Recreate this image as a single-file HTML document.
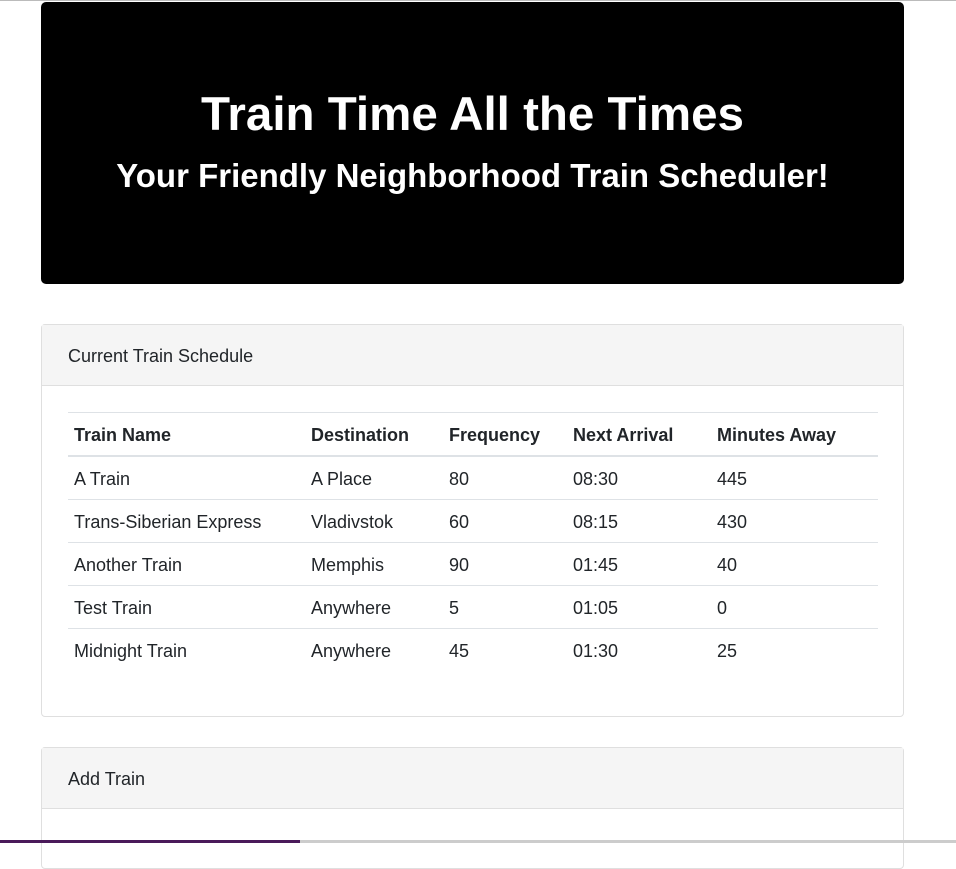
<!DOCTYPE html>
<html><head><style>
body{margin:0;width:956px;height:843px;overflow:hidden;background:#fff;font-family:"Liberation Sans",sans-serif;color:#212529;position:relative}
.top{position:absolute;left:0;top:0;width:956px;height:1px;background:#bbb}
.jumbo{position:absolute;left:41px;top:2px;width:863px;height:282px;background:#000;border-radius:5px;color:#fff;text-align:center}
.jumbo h1{position:absolute;top:85px;left:0;right:0;margin:0;font-size:47.5px;font-weight:bold;line-height:56px}
.jumbo h2{position:absolute;top:154px;left:0;right:0;margin:0;font-size:33px;font-weight:bold;line-height:40px}
.card{position:absolute;left:41px;width:861px;border:1px solid #dfdfdf;border-radius:4px;background:#fff}
.ch{height:61px;background:#f5f5f5;border-bottom:1px solid #dfdfdf;font-size:18px;line-height:63px;padding-left:26px;box-sizing:border-box}
table{position:absolute;left:26px;top:87px;width:810px;border-collapse:collapse;font-size:18px}
td,th{text-align:left;padding:2px 6px 0;height:40px;border-top:1px solid #dee2e6}
th{border-bottom:2px solid #dee2e6}
.bar{position:absolute;left:0;top:840px;width:956px;height:3px;background:#ccc}
.bar div{width:300px;height:3px;background:#4a1a5a}
</style></head><body>
<div class="top"></div>
<div class="jumbo"><h1>Train Time All the Times</h1><h2>Your Friendly Neighborhood Train Scheduler!</h2></div>
<div class="card" style="top:324px;height:391px">
<div class="ch">Current Train Schedule</div>
<table>
<tr><th style="width:225px">Train Name</th><th style="width:126px">Destination</th><th style="width:112px">Frequency</th><th style="width:132px">Next Arrival</th><th>Minutes Away</th></tr>
<tr><td>A Train</td><td>A Place</td><td>80</td><td>08:30</td><td>445</td></tr>
<tr><td>Trans-Siberian Express</td><td>Vladivstok</td><td>60</td><td>08:15</td><td>430</td></tr>
<tr><td>Another Train</td><td>Memphis</td><td>90</td><td>01:45</td><td>40</td></tr>
<tr><td>Test Train</td><td>Anywhere</td><td>5</td><td>01:05</td><td>0</td></tr>
<tr><td>Midnight Train</td><td>Anywhere</td><td>45</td><td>01:30</td><td>25</td></tr>
</table>
</div>
<div class="card" style="top:747px;height:120px">
<div class="ch">Add Train</div>
</div>
<div class="bar"><div></div></div>
</body></html>
